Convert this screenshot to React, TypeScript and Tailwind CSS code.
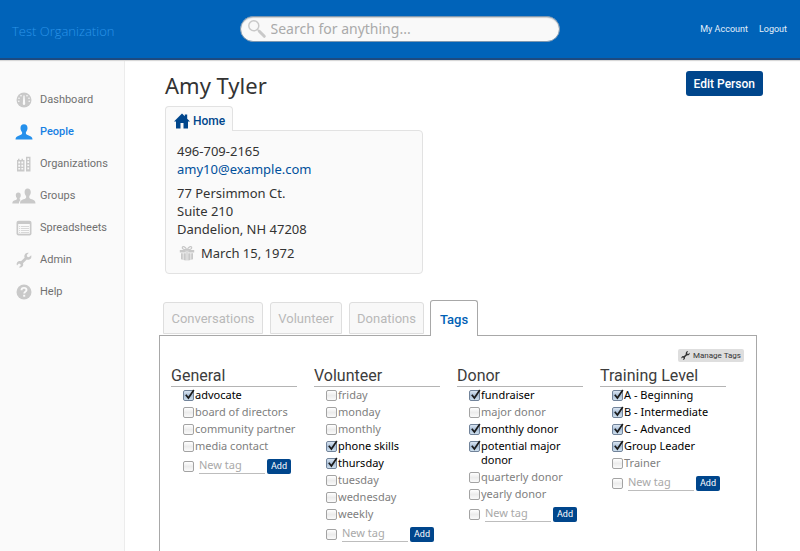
import React from "react";

const body = "font-['Noto_Sans','Open_Sans',sans-serif]";
const ui = "font-['Roboto',sans-serif]";

function GaugeIcon() {
  return (
    <svg viewBox="0 0 16 16" className="h-4 w-4" aria-hidden="true">
      <circle cx="8" cy="8" r="7.5" fill="currentColor" />
      <g fill="#fafafa">
        <path d="M7.4 3.5h1.2l.6 8.2a1.2 1.2 0 0 1-2.4 0z" />
        <circle cx="5" cy="3.8" r=".8" />
        <circle cx="11" cy="3.8" r=".8" />
        <circle cx="3" cy="6.2" r=".8" />
        <circle cx="13" cy="6.2" r=".8" />
        <circle cx="2.8" cy="9.2" r=".8" />
        <circle cx="13.2" cy="9.2" r=".8" />
      </g>
    </svg>
  );
}

function PersonIcon() {
  return (
    <svg viewBox="0 0 18 16" className="h-4 w-[18px]" aria-hidden="true">
      <path
        fill="currentColor"
        d="M9 .3c2.300 0 3.500 1.500 3.500 3.700 0 1.700-.6 3.200-1.600 4.200v1.400c0 .8 1 1.200 2.900 1.800 2.500.8 3.600 1.600 3.700 4.100H.5c.1-2.500 1.200-3.300 3.700-4.100 1.900-.6 2.900-1 2.900-1.800V8.200C6.100 7.200 5.500 5.700 5.500 4 5.500 1.800 6.700.3 9 .3z"
      />
    </svg>
  );
}

function BuildingsIcon() {
  return (
    <svg viewBox="0 0 16 16" className="h-4 w-4" aria-hidden="true">
      <path fill="currentColor" d="M1 4h1V2.800h1.500V4h2V2.800H7V4h1.500v11.500H1zM10 .8h4.500v14.700H10z" />
      <g fill="#fafafa">
        <path d="M2.300 5.500h1.800v2H2.300zM5.400 5.500h1.800v2H5.400zM2.300 8.700h1.800v2H2.300zM5.400 8.700h1.800v2H5.400zM2.300 12h1.800v1.500H2.300zM5.400 12h1.800v1.500H5.400z" />
        <path d="M11.400 2.200h1.700v1.700h-1.700zM11.400 5.300h1.700V7h-1.700zM11.400 8.400h1.700v1.700h-1.700zM11.400 11.500h1.700v1.700h-1.700z" />
      </g>
    </svg>
  );
}

function GroupIcon() {
  return (
    <svg viewBox="0 0 24 16" className="h-4 w-6" aria-hidden="true">
      <g fill="currentColor">
        <path d="M15.500.5c2.200 0 3.300 1.500 3.300 3.600 0 1.700-.6 3.100-1.500 4v1.400c0 .8.9 1.200 2.700 1.800 2.400.8 3.400 1.700 3.500 4.100H8c.1-2.400 1-3.300 3.400-4.100 1.800-.6 2.700-1 2.700-1.800V8.100c-.9-.9-1.500-2.300-1.500-4 0-2.100 1-3.600 2.900-3.600z" />
        <path d="M6.300 4.500c1.700 0 2.500 1.100 2.500 2.700 0 1.200-.4 2.200-1.100 2.900v1c0 .4.300.6.900.8-1.100.9-1.600 1.900-1.700 3.500H.3c.1-1.900.8-2.500 2.600-3.100 1.300-.4 2-.7 2-1.200v-1c-.7-.7-1.100-1.700-1.100-2.900 0-1.600.8-2.700 2.500-2.700z" />
      </g>
    </svg>
  );
}

function SheetIcon() {
  return (
    <svg viewBox="0 0 16 16" className="h-4 w-4" aria-hidden="true">
      <rect x=".5" y=".8" width="15" height="14.700" rx="2" fill="currentColor" />
      <rect x="2.200" y="4" width="11.600" height="9.700" fill="#fafafa" />
      <path
        stroke="currentColor"
        strokeWidth=".7"
        d="M3 6.500h1.200M5 6.500h8M3 8.500h1.200M5 8.500h8M3 10.500h1.200M5 10.500h8M3 12.500h1.200M5 12.500h8"
      />
    </svg>
  );
}

function WrenchIcon({ className }: { className: string }) {
  return (
    <svg viewBox="0 0 16 16" className={className} aria-hidden="true">
      <path
        fill="currentColor"
        d="M12.800.8l-2 2.300.4 1.700 1.700.4 2.300-2c.6 1.900-.2 3.700-1.800 4.400-.9.4-1.800.3-2.600 0L7 11.300c.3.900.3 1.700-.1 2.500-.7 1.500-2.500 2.200-4 1.500l1.900-1.800-.4-1.500-1.500-.4L1 13.500c-.8-1.600-.1-3.500 1.500-4.200.8-.4 1.700-.3 2.500 0l3.600-3.600c-.4-.9-.4-1.900 0-2.800.7-1.700 2.500-2.600 4.200-2.100z"
      />
    </svg>
  );
}

function HelpIcon() {
  return (
    <svg viewBox="0 0 16 16" className="h-4 w-4" aria-hidden="true">
      <circle cx="8" cy="8" r="7.500" fill="currentColor" />
      <path d="M5.500 6.300c0-1.500 1-2.400 2.500-2.400s2.500.8 2.500 2.100c0 1.600-2.300 1.700-2.300 3.600" fill="none" stroke="#fafafa" strokeWidth="1.900" />
      <rect x="7.200" y="10.800" width="2" height="1.900" fill="#fafafa" />
    </svg>
  );
}

function SearchIcon() {
  return (
    <svg viewBox="0 0 20 20" className="h-5 w-5 shrink-0 text-[#c9c9c9]" aria-hidden="true">
      <circle cx="6.800" cy="6.800" r="5" fill="none" stroke="currentColor" strokeWidth="1.500" />
      <path d="M10.500 10.500l2 2" stroke="currentColor" strokeWidth="1.500" />
      <path d="M12.300 12.300l5 5" stroke="currentColor" strokeWidth="3" strokeLinecap="round" />
    </svg>
  );
}

function HouseIcon() {
  return (
    <svg viewBox="0 0 16 16" className="h-4 w-4 text-[#00468c]" aria-hidden="true">
      <path fill="currentColor" d="M8 .5l2.800 2.800V1.500h2.400v4.200L16 8.500h-2V15.500H9.500V10h-3v5.500H2V8.500H0z" />
    </svg>
  );
}

function GiftIcon() {
  return (
    <svg viewBox="0 0 16 16" className="h-4 w-4 text-[#c8c8c8]" aria-hidden="true">
      <g fill="none" stroke="currentColor" strokeWidth="1.200">
        <path d="M8 5C6 1 3.300.8 3.300 2.700 3.300 4.500 6 4.700 8 5zM8 5c2-4 4.700-4.200 4.700-2.300C12.700 4.500 10 4.700 8 5z" />
      </g>
      <path
        fill="currentColor"
        d="M.8 5h6v2.600H.8zM7.400 5h1.200v10.500H7.400zM9.200 5h6v2.600h-6zM2 8.300h1.800v6.500L2 14.300zM4.500 8.300h2.300v7.200l-2.300-.4zM9.200 8.300h2.300v6.800l-2.300.4zM12.200 8.300H14v6l-1.800.5z"
      />
    </svg>
  );
}

const nav = [
  { label: "Dashboard", icon: <GaugeIcon /> },
  { label: "People", icon: <PersonIcon />, active: true },
  { label: "Organizations", icon: <BuildingsIcon /> },
  { label: "Groups", icon: <GroupIcon /> },
  { label: "Spreadsheets", icon: <SheetIcon /> },
  { label: "Admin", icon: <WrenchIcon className="h-4 w-4" /> },
  { label: "Help", icon: <HelpIcon /> },
];

type Tag = { name: string; on?: boolean };

const groups: { title: string; tags: Tag[] }[] = [
  {
    title: "General",
    tags: [{ name: "advocate", on: true }, { name: "board of directors" }, { name: "community partner" }, { name: "media contact" }],
  },
  {
    title: "Volunteer",
    tags: [
      { name: "friday" },
      { name: "monday" },
      { name: "monthly" },
      { name: "phone skills", on: true },
      { name: "thursday", on: true },
      { name: "tuesday" },
      { name: "wednesday" },
      { name: "weekly" },
    ],
  },
  {
    title: "Donor",
    tags: [
      { name: "fundraiser", on: true },
      { name: "major donor" },
      { name: "monthly donor", on: true },
      { name: "potential major donor", on: true },
      { name: "quarterly donor" },
      { name: "yearly donor" },
    ],
  },
  {
    title: "Training Level",
    tags: [
      { name: "A - Beginning", on: true },
      { name: "B - Intermediate", on: true },
      { name: "C - Advanced", on: true },
      { name: "Group Leader", on: true },
      { name: "Trainer" },
    ],
  },
];

function CheckBox({ on, label }: { on?: boolean; label?: string }) {
  return (
    <span className="relative h-[11px] w-[11px] shrink-0">
      <input
        type="checkbox"
        defaultChecked={on}
        aria-label={label}
        className="peer block h-[11px] w-[11px] appearance-none rounded-[2px] border border-[#a3a3a3] bg-linear-to-b from-white via-[#ececec] to-[#fafafa] checked:border-[#71839a] checked:from-[#dbe6f2] checked:via-[#a9bfd8] checked:to-[#cfe0ee]"
      />
      <svg viewBox="0 0 12 12" className="pointer-events-none absolute -top-px left-0 hidden h-3 w-3 peer-checked:block" aria-hidden="true">
        <path d="M2.800 5.800l2.600 3.200L10.800 1" fill="none" stroke="#1c1c1c" strokeWidth="1.700" />
      </svg>
    </span>
  );
}

function TagGroup({ title, tags }: { title: string; tags: Tag[] }) {
  return (
    <section>
      <h2 className={`${ui} border-b border-[#b4b4b4] text-base leading-5 text-[#3c3c3c]`}>{title}</h2>
      <ul className="-mr-2 mt-px pl-3">
        {tags.map((t) => (
          <li key={t.name} className="mb-[3px]">
            <label className={`flex gap-px text-[11px] leading-[14px] ${t.on ? "text-black" : "text-[#808080]"}`}>
              <span className="flex h-[14px] items-center pt-px">
                <CheckBox on={t.on} />
              </span>
              <span>{t.name}</span>
            </label>
          </li>
        ))}
      </ul>
      <form className="mt-[5px] flex items-center pl-3" onSubmit={(e) => e.preventDefault()}>
        <CheckBox label={`Apply new ${title} tag`} />
        <input
          type="text"
          placeholder="New tag"
          aria-label={`New ${title} tag`}
          className="ml-[5px] h-4 w-[66px] min-w-0 border-b border-[#bdbdbd] bg-transparent text-[11px] outline-none placeholder:text-[#a9a9a9]"
        />
        <button type="submit" className={`${ui} ml-0.5 h-[15px] w-6 shrink-0 rounded-[2px] bg-[#00468c] text-[9px] leading-[15px] text-white`}>
          Add
        </button>
      </form>
    </section>
  );
}

export default function App() {
  return (
    <div className={`${body} flex min-h-screen flex-col bg-white text-[#333]`}>
      <header className="z-10 flex h-[60px] items-center border-b-2 border-[#1d4a80] bg-[#0063b9] shadow-[0_1px_1px_#d8d8d8]">
        <div className="flex-1 pt-1.5 pl-3 font-['Open_Sans',sans-serif] text-[13px] font-light text-[#2b93e8]">Test Organization</div>
        <label className="flex h-[26px] w-2/5 items-center rounded-full border border-[#7d97b0] bg-[#f9f9f9] pl-1.5 shadow-[inset_0_1px_1px_#ccc]">
          <SearchIcon />
          <input
            type="search"
            aria-label="Search"
            placeholder="Search for anything..."
            className="ml-1 min-w-0 flex-1 bg-transparent text-sm outline-none placeholder:text-[#aaa]"
          />
        </label>
        <nav className={`${ui} flex flex-1 justify-end gap-[11px] pt-0.5 pr-[13px] text-[9px] text-[#e4f0fb]`}>
          <a href="#account">My Account</a>
          <a href="#logout">Logout</a>
        </nav>
      </header>

      <div className="flex flex-1">
        <aside className="w-[125px] shrink-0 border-r border-[#ececec] bg-[#fafafa] pt-6">
          <nav className={`${ui} text-[11px]`}>
            {nav.map((n) => (
              <a
                key={n.label}
                href={`#${n.label.toLowerCase()}`}
                className={`flex h-8 items-center gap-1 pl-3 ${n.active ? "font-medium text-[#1780e3]" : "text-[#707070]"}`}
              >
                <span className={`flex w-6 justify-center ${n.active ? "text-[#2490ec]" : "text-[#c9c9c9]"}`}>{n.icon}</span>
                {n.label}
              </a>
            ))}
          </nav>
        </aside>

        <main className="flex min-w-0 flex-1 flex-col pr-[37px] pl-[34px]">
          <div className="flex items-start justify-between pt-[11px] pl-1.5">
            <h1 className="text-[22px] leading-7">Amy Tyler</h1>
            <button type="button" className={`${ui} h-[25px] rounded-[3px] bg-[#00468c] px-2 text-xs font-medium text-white`}>
              Edit Person
            </button>
          </div>

          <section className="mt-[7px] ml-1.5 w-[258px]">
            <h2 className={`${ui} relative -mb-px flex h-[25px] w-[68px] items-center gap-[3px] rounded-t-[4px] border border-b-0 border-[#e2e2e2] bg-[#fafafa] pt-1 pl-2 text-xs font-medium text-[#00468c]`}>
              <HouseIcon />
              Home
            </h2>
            <div className="flex flex-col gap-1.5 rounded-[4px] rounded-tl-none border border-[#e2e2e2] bg-[#fafafa] px-[11px] py-[11px] text-[13px] leading-[18px]">
              <div>
                <p>496-709-2165</p>
                <a href="mailto:amy10@example.com" className="block text-[#00509c]">
                  amy10@example.com
                </a>
              </div>
              <address className="not-italic">
                77 Persimmon Ct.
                <br />
                Suite 210
                <br />
                Dandelion, NH 47208
              </address>
              <p className="flex items-center gap-1.5 pl-0.5">
                <GiftIcon />
                March 15, 1972
              </p>
            </div>
          </section>

          <div role="tablist" className={`${ui} relative z-10 mt-[26px] -mb-px flex items-end pl-1 text-[13px]`}>
            <button type="button" role="tab" className="mr-[7px] mb-0.5 h-8 w-[100px] rounded-t-[3px] border border-[#dedede] bg-[#f8f8f8] pt-0.5 text-[#b9b9b9]">
              Conversations
            </button>
            <button type="button" role="tab" className="mr-[7px] mb-0.5 h-8 w-[72px] rounded-t-[3px] border border-[#dedede] bg-[#f8f8f8] pt-0.5 text-[#b9b9b9]">
              Volunteer
            </button>
            <button type="button" role="tab" className="mr-1.5 mb-0.5 h-8 w-[75px] rounded-t-[3px] border border-[#dedede] bg-[#f8f8f8] pt-0.5 text-[#b9b9b9]">
              Donations
            </button>
            <button type="button" role="tab" aria-selected="true" className="h-9 w-12 rounded-t-[3px] border border-b-0 border-[#a8a8a8] bg-white pt-0.5 font-medium text-[#0060b5]">
              Tags
            </button>
          </div>

          <div role="tabpanel" className="mr-1.5 flex-1 border border-b-0 border-[#a8a8a8] pt-[13px] pr-3 pl-[11px]">
            <div className="flex justify-end">
              <button type="button" className={`${ui} flex h-[13px] items-center gap-[3px] rounded-[2px] bg-[#dedede] px-[3px] text-[8px] text-[#333]`}>
                <WrenchIcon className="h-[9px] w-[9px]" />
                Manage Tags
              </button>
            </div>
            <div className="mt-1 grid grid-cols-4 gap-[17px] pr-[18px]">
              {groups.map((g) => (
                <TagGroup key={g.title} {...g} />
              ))}
            </div>
          </div>
        </main>
      </div>
    </div>
  );
}
